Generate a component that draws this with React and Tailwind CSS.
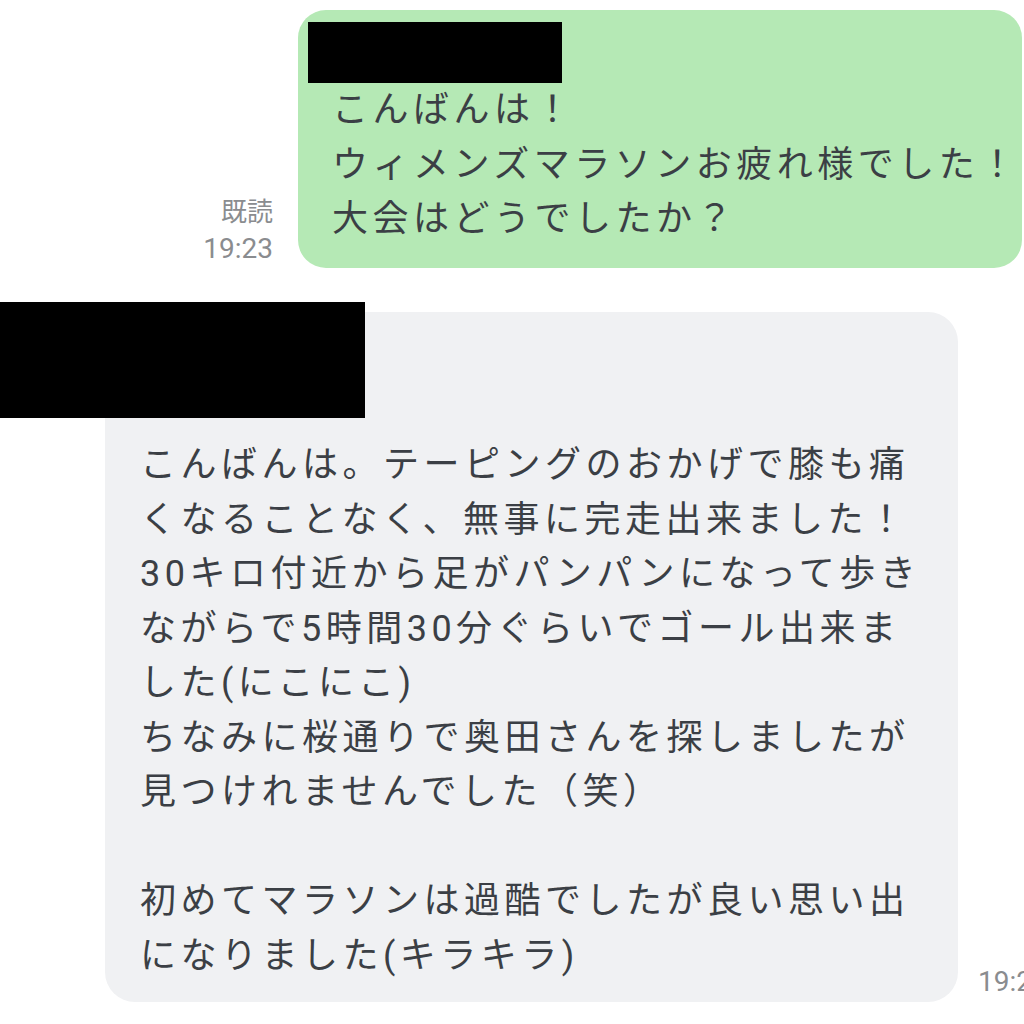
const FONT = { fontFamily: 'Roboto, "Noto Sans CJK JP", sans-serif' }

const SENT = [
  'こんばんは！',
  'ウィメンズマラソンお疲れ様でした！',
  '大会はどうでしたか？',
]

const REPLY = [
  'こんばんは。テーピングのおかげで膝も痛',
  'くなることなく、無事に完走出来ました！',
  '30キロ付近から足がパンパンになって歩き',
  'ながらで5時間30分ぐらいでゴール出来ま',
  'した(にこにこ)',
  'ちなみに桜通りで奥田さんを探しましたが',
  '見つけれませんでした（笑）',
  '',
  '初めてマラソンは過酷でしたが良い思い出',
  'になりました(キラキラ)',
]

function Lines({ lines }) {
  return lines.map((l, i) => (
    <div key={i} className="whitespace-nowrap h-[54.5px] leading-[54.5px]">
      {l || '\u00a0'}
    </div>
  ))
}

export default function App() {
  return (
    <div className="relative w-[1024px] h-[1024px] bg-white overflow-hidden text-[#3b3f45]" style={FONT}>
      {/* sent message */}
      <div className="flex items-end justify-end pt-[10px] pr-[2px] gap-[25px]">
        <div className="flex flex-col items-end text-[#8a8c8f] pb-[1px]">
          <span className="text-[26px] leading-[38px]">既読</span>
          <span className="text-[28px] leading-[36px]">19:23</span>
        </div>
        <div className="relative shrink-0 w-[724px] h-[258px] bg-[#b5e9b5] rounded-[28px] pt-[73px] pl-[34px] text-[36px] tracking-[4.5px]">
          <div className="absolute left-[10px] top-[12px] w-[254px] h-[61px] bg-black" />
          <Lines lines={SENT} />
        </div>
      </div>

      {/* received message */}
      <div className="flex items-end pl-[105px] pt-[44px] gap-[20px]">
        <div className="shrink-0 w-[853px] h-[690px] bg-[#f0f1f3] rounded-[30px] pt-[126px] pl-[35px] text-[36px] tracking-[4.5px]">
          <Lines lines={REPLY} />
        </div>
        <span className="shrink-0 text-[28px] leading-[36px] text-[#8a8c8f] whitespace-nowrap pb-[2px]">19:23</span>
      </div>

      <div className="absolute left-0 top-[302px] w-[365px] h-[116px] bg-black" />
    </div>
  )
}
